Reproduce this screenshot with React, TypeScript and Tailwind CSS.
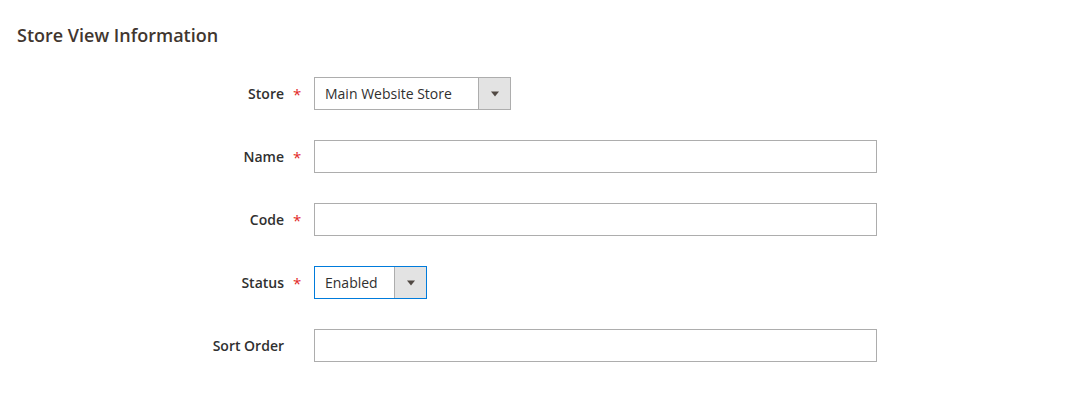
const font = { fontFamily: '"Open Sans", "Liberation Sans", sans-serif' };

type Field = {
  label: string;
  required?: boolean;
  kind: "select" | "text";
  value?: string;
  width: string;
  focused?: boolean;
};

const FIELDS: Field[] = [
  { label: "Store", required: true, kind: "select", value: "Main Website Store", width: "w-[197px]" },
  { label: "Name", required: true, kind: "text", width: "w-[563px]" },
  { label: "Code", required: true, kind: "text", width: "w-[563px]" },
  { label: "Status", required: true, kind: "select", value: "Enabled", width: "w-[113px]", focused: true },
  { label: "Sort Order", kind: "text", width: "w-[563px]" },
];

function Arrow() {
  return (
    <svg width="10" height="6" viewBox="0 0 10 6">
      <path d="M1 0.5 L9 0.5 L5 5.5 Z" fill="#514943" />
    </svg>
  );
}

function Control({ field }: { field: Field }) {
  const border = field.focused ? "border-[#007bdb]" : "border-[#adadad]";
  if (field.kind === "select") {
    return (
      <div className={`flex h-[33px] ${field.width} border ${border} bg-white`}>
        <div className="flex-1 flex items-center pl-[10px] text-[14px] text-[#303030]">
          {field.value}
        </div>
        <div className="w-[32px] flex items-center justify-center bg-[#e3e3e3] border-l border-[#adadad]">
          <Arrow />
        </div>
      </div>
    );
  }
  return <div className={`h-[33px] ${field.width} border ${border} bg-white`} />;
}

export default function App() {
  return (
    <div className="w-[1070px] h-[404px] bg-white" style={font}>
      <h2 className="pl-[17px] pt-[22px] text-[18px] font-semibold text-[#41362f] leading-[26px]">
        Store View Information
      </h2>
      <div className="mt-[29px] flex flex-col gap-[30px]">
        {FIELDS.map((f) => (
          <div key={f.label} className="flex items-center">
            <div className="w-[284px] text-right text-[14px] font-semibold text-[#303030]">
              {f.label}
            </div>
            <div className="w-[30px] pl-[9px]">
              {f.required && <span className="text-[#e22626] text-[15px]">*</span>}
            </div>
            <Control field={f} />
          </div>
        ))}
      </div>
    </div>
  );
}
